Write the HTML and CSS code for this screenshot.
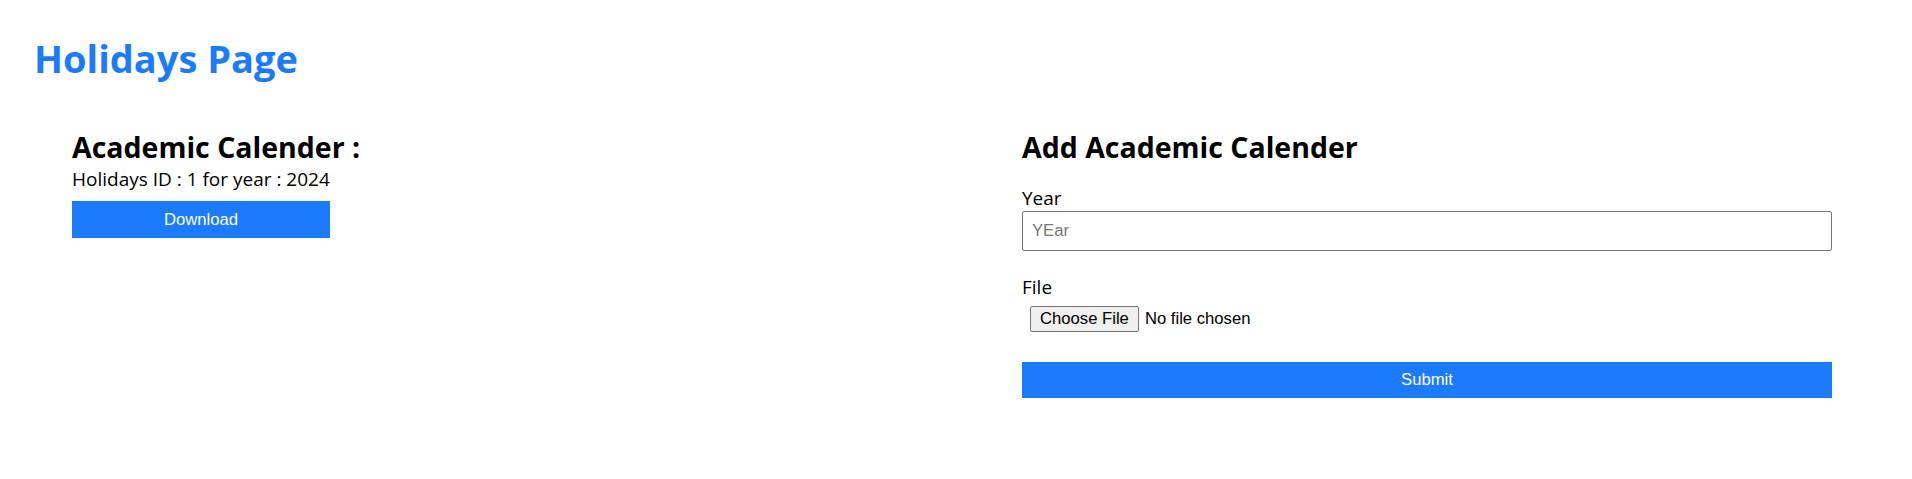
FILE: index.html
```html
<!DOCTYPE html>
<html lang="en">
<head>
<meta charset="utf-8">
<title>Holidays Page</title>
<link rel="stylesheet" href="styles.css">
</head>
<body>
  <h1 class="page-title">Holidays Page</h1>
  <div class="columns">
    <section class="col">
      <h2 class="col-title">Academic Calender :</h2>
      <p class="info">Holidays ID : 1 for year : 2024</p>
      <button class="btn btn-download" type="button">Download</button>
    </section>
    <section class="col">
      <h2 class="col-title">Add Academic Calender</h2>
      <form class="cal-form">
        <label class="field-label" for="year">Year</label>
        <input class="text-input" id="year" type="text" placeholder="YEar">
        <label class="field-label file-label" for="file">File</label>
        <input class="file-input" id="file" type="file">
        <button class="btn btn-submit" type="button">Submit</button>
      </form>
    </section>
  </div>
</body>
</html>
```

FILE: styles.css
```css
* { box-sizing: border-box; }
html, body { margin: 0; padding: 0; background: #fff; }
body {
  font-family: "Open Sans", "Noto Sans", sans-serif;
  color: #000;
  font-size: 19px;
}
.page-title {
  margin: 0;
  padding: 34px 0 0 34px;
  font-size: 38px;
  line-height: 48px;
  font-weight: 700;
  color: #1b7bfc;
}
.columns {
  display: grid;
  grid-template-columns: 810px 810px;
  column-gap: 140px;
  padding: 0 0 0 72px;
  margin-top: 47px;
}
.col-title {
  margin: 0;
  font-size: 28.5px;
  line-height: 36px;
  font-weight: 700;
}
.info {
  margin: 0;
  line-height: 28px;
}
.btn {
  display: block;
  border: none;
  background: #1b7bfc;
  color: #fff;
  font-family: "Liberation Sans", Arial, sans-serif;
  font-size: 16.67px;
  cursor: pointer;
}
.btn-download {
  width: 258px;
  height: 37px;
  margin-top: 8px;
}
.cal-form {
  display: flex;
  flex-direction: column;
  align-items: flex-start;
  margin-top: 20px;
}
.field-label {
  line-height: 26px;
}
.text-input {
  width: 100%;
  height: 40px;
  border: 1px solid #767676;
  border-radius: 2px;
  padding: 0 9px;
  font-family: "Liberation Sans", Arial, sans-serif;
  font-size: 16.67px;
}
.text-input::placeholder { color: #767676; }
.file-label { margin-top: 23px; }
.file-input {
  margin: 6px 0 0 8px;
  font-family: "Liberation Sans", Arial, sans-serif;
  font-size: 16.67px;
}
.file-input::file-selector-button {
  font: inherit;
  padding: 2px 9px;
  margin-right: 6px;
  border: 1px solid #767676;
  border-radius: 2px;
  background: #efefef;
  color: #000;
}
.btn-submit {
  width: 100%;
  height: 36px;
  margin-top: 30px;
}
```
